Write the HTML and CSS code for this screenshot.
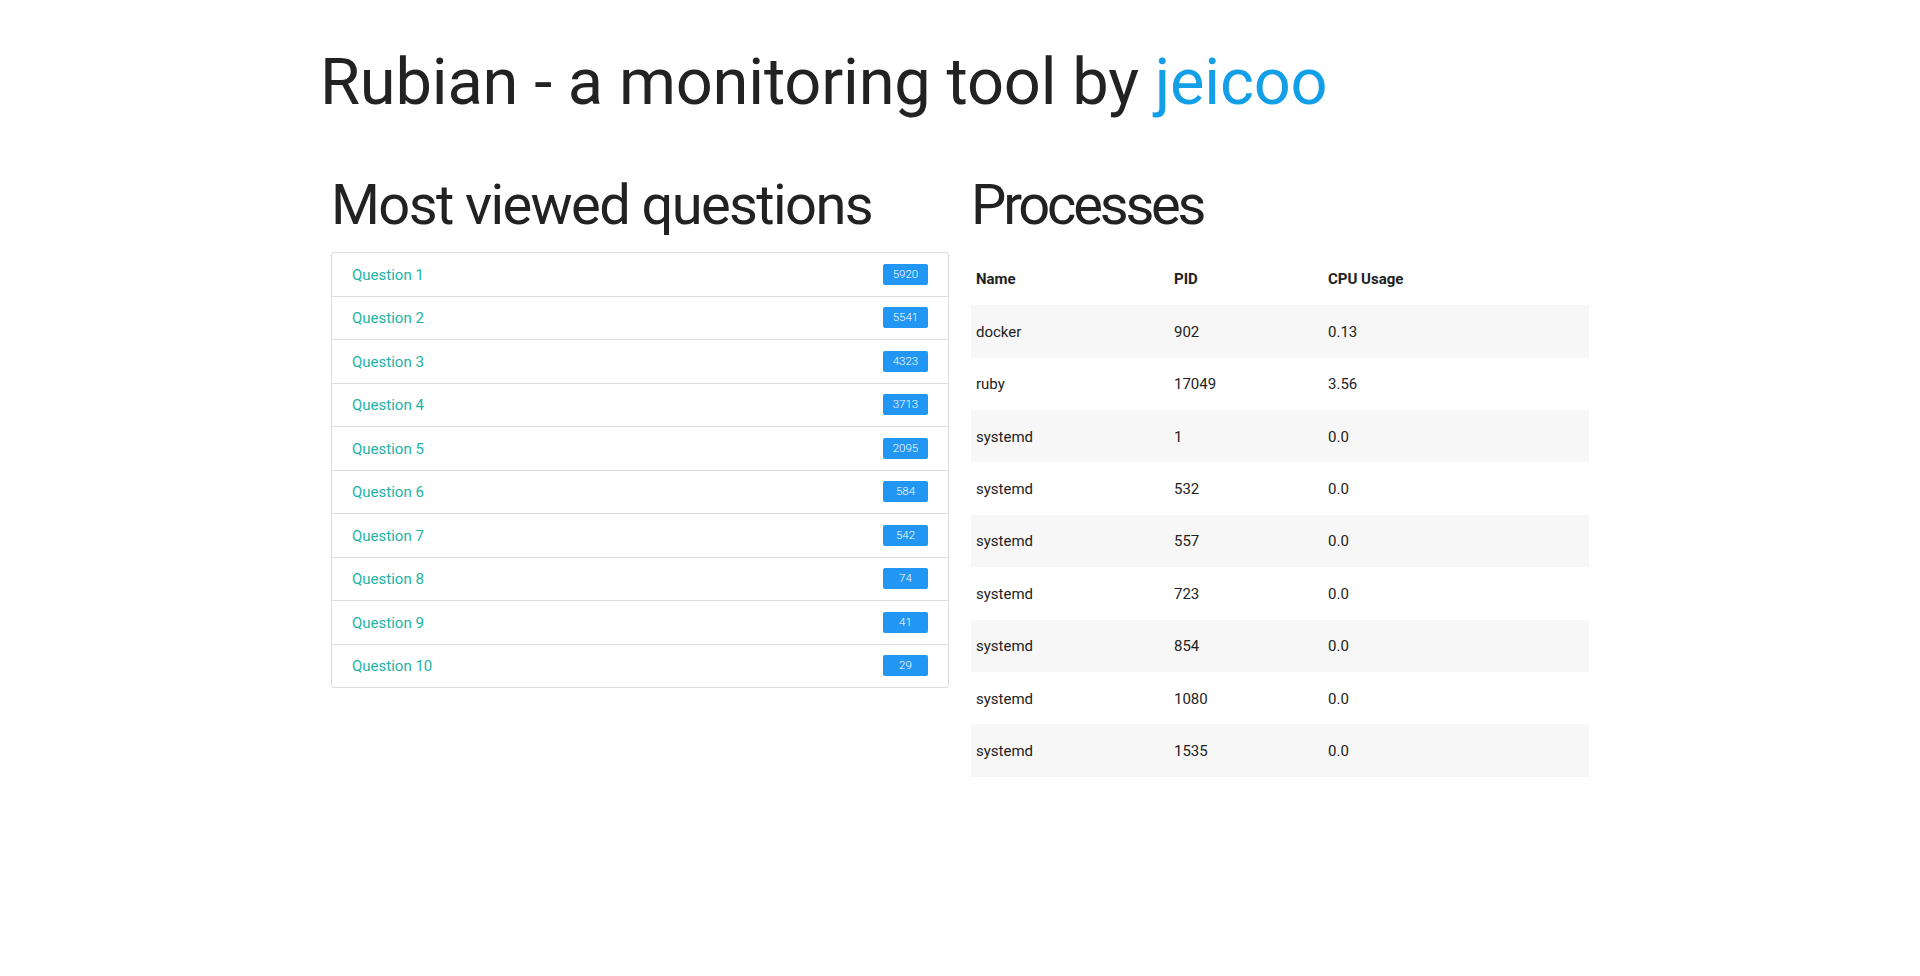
FILE: index.html
```html
<!DOCTYPE html>
<html lang="en">
<head>
<meta charset="utf-8">
<title>Rubian</title>
<link rel="stylesheet" href="styles.css">
</head>
<body>
<div class="page">
  <h1 class="title">Rubian - a monitoring tool by <a class="brand" href="#">jeicoo</a></h1>
  <div class="columns">
    <section class="col">
      <h2 class="heading">Most viewed questions</h2>
      <ul class="qlist">
        <li class="qitem"><a class="qlink" href="#">Question 1</a><span class="badge">5920</span></li>
        <li class="qitem"><a class="qlink" href="#">Question 2</a><span class="badge">5541</span></li>
        <li class="qitem"><a class="qlink" href="#">Question 3</a><span class="badge">4323</span></li>
        <li class="qitem"><a class="qlink" href="#">Question 4</a><span class="badge">3713</span></li>
        <li class="qitem"><a class="qlink" href="#">Question 5</a><span class="badge">2095</span></li>
        <li class="qitem"><a class="qlink" href="#">Question 6</a><span class="badge">584</span></li>
        <li class="qitem"><a class="qlink" href="#">Question 7</a><span class="badge">542</span></li>
        <li class="qitem"><a class="qlink" href="#">Question 8</a><span class="badge">74</span></li>
        <li class="qitem"><a class="qlink" href="#">Question 9</a><span class="badge">41</span></li>
        <li class="qitem"><a class="qlink" href="#">Question 10</a><span class="badge">29</span></li>
      </ul>
    </section>
    <section class="col">
      <h2 class="heading heading-narrow">Processes</h2>
      <table class="ptable">
        <thead>
          <tr><th class="c-name">Name</th><th class="c-pid">PID</th><th>CPU Usage</th></tr>
        </thead>
        <tbody>
          <tr><td>docker</td><td>902</td><td>0.13</td></tr>
          <tr><td>ruby</td><td>17049</td><td>3.56</td></tr>
          <tr><td>systemd</td><td>1</td><td>0.0</td></tr>
          <tr><td>systemd</td><td>532</td><td>0.0</td></tr>
          <tr><td>systemd</td><td>557</td><td>0.0</td></tr>
          <tr><td>systemd</td><td>723</td><td>0.0</td></tr>
          <tr><td>systemd</td><td>854</td><td>0.0</td></tr>
          <tr><td>systemd</td><td>1080</td><td>0.0</td></tr>
          <tr><td>systemd</td><td>1535</td><td>0.0</td></tr>
        </tbody>
      </table>
    </section>
  </div>
</div>
</body>
</html>
```

FILE: styles.css
```css
* { box-sizing: border-box; }

html, body {
  margin: 0;
  padding: 0;
  background: #fff;
}

body {
  font-family: Roboto, "Open Sans", sans-serif;
  color: #222;
  font-size: 15px;
}

.page {
  padding-left: 316px;
  width: 1606px;
}

.title {
  margin: 0;
  padding: 43px 0 0 4px;
  font-size: 65px;
  line-height: 1.2;
  font-weight: 400;
  color: #222;
  letter-spacing: -0.2px;
}

.brand {
  color: #139fe8;
  text-decoration: none;
}

.columns {
  display: grid;
  grid-template-columns: 618px 618px;
  column-gap: 22px;
  margin-left: 15px;
  margin-top: 51px;
}

.heading {
  margin: 0 0 13px 0;
  font-size: 56px;
  line-height: 1.2;
  font-weight: 400;
  color: #222;
  letter-spacing: -1.6px;
}

.heading-narrow {
  letter-spacing: -3.2px;
}

.qlist {
  list-style: none;
  margin: 1px 0 0;
  padding: 0;
}

.qitem {
  display: flex;
  align-items: center;
  justify-content: space-between;
  padding: 11.5px 20px 9.5px;
  line-height: 21.5px;
  border: 1px solid #dddddd;
  margin-bottom: -1px;
}

.qitem:first-child {
  border-radius: 3px 3px 0 0;
}

.qitem:last-child {
  border-radius: 0 0 3px 3px;
}

.qlink {
  color: #1cb3a3;
  text-decoration: none;
  font-size: 15px;
}

.badge {
  width: 45px;
  height: 21px;
  line-height: 21px;
  margin-top: -2px;
  text-align: center;
  background: #2196f3;
  color: #fff;
  font-size: 11.5px;
  font-weight: 300;
  border-radius: 2px;
}

.ptable {
  width: 618px;
  border-collapse: collapse;
  font-size: 15px;
}

.ptable th,
.ptable td {
  text-align: left;
  padding: 1px 5px 0;
  height: 52.4px;
  vertical-align: middle;
}

.ptable th {
  font-weight: 700;
  height: 53px;
}

.c-name { width: 198px; }
.c-pid { width: 154px; }

.ptable tbody tr:nth-child(odd) {
  background: #f7f7f7;
}
```
